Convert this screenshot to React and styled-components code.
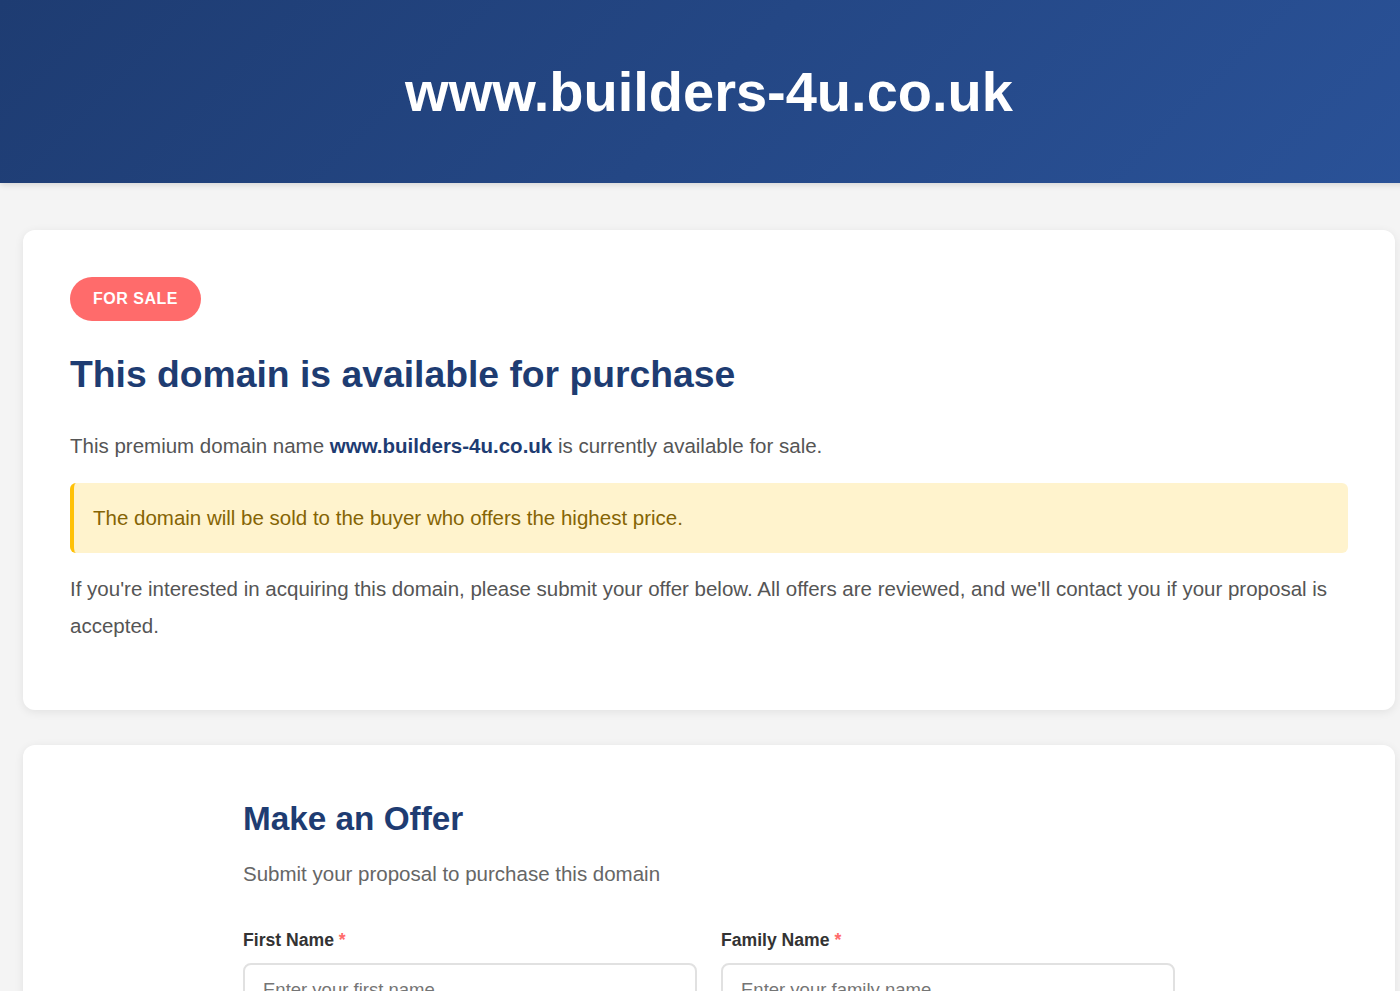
import React from "react";
import styled, { createGlobalStyle } from "styled-components";

const Global = createGlobalStyle`
  html, body { margin: 0; padding: 0; }
  body {
    background: #f4f4f4;
    font-family: "Liberation Sans", Arial, sans-serif;
    overflow-x: hidden;
  }
  * { box-sizing: border-box; }
`;

const Page = styled.div`
  width: 1418px;
`;

const Header = styled.header`
  height: 183px;
  background: linear-gradient(135deg, #1e3c72 0%, #2a5298 100%);
  display: flex;
  align-items: center;
  justify-content: center;
  box-shadow: 0 2px 6px rgba(0, 0, 0, 0.12);
`;

const SiteTitle = styled.h1`
  margin: 0;
  color: #fff;
  font-size: 56px;
  font-weight: 700;
  line-height: 1.2;
`;

const Main = styled.main`
  padding: 47px 23px 40px;
  display: flex;
  flex-direction: column;
  gap: 35px;
`;

const Card = styled.section`
  background: #fff;
  border-radius: 12px;
  box-shadow: 0 2px 10px rgba(0, 0, 0, 0.08);
  padding: ${(p) => p.$pad || "47px"};
`;

const Badge = styled.span`
  display: inline-block;
  background: #ff6b6b;
  color: #fff;
  font-size: 16px;
  font-weight: 700;
  letter-spacing: 0.5px;
  line-height: 20px;
  padding: 12px 23px;
  border-radius: 22px;
`;

const Title = styled.h2`
  margin: ${(p) => p.$margin || "31px 0 30px"};
  color: #1e3c72;
  font-size: ${(p) => p.$size || "37.3px"};
  font-weight: 700;
  line-height: 1.2;
`;

const Text = styled.p`
  margin: 0 0 ${(p) => p.$mb || "19px"};
  color: ${(p) => p.$color || "#555"};
  font-size: 20.5px;
  line-height: 37.4px;
`;

const Strong = styled.strong`
  color: #1e3c72;
`;

const Notice = styled.div`
  background: #fff3cd;
  border-left: 4px solid #ffc107;
  border-radius: 6px;
  color: #856404;
  font-size: 20.5px;
  line-height: 37.4px;
  padding: 16px 19px;
  margin-bottom: 17px;
`;

const FormWrap = styled.div`
  width: 932px;
  margin: 0 auto;
`;

const Row = styled.div`
  display: grid;
  grid-template-columns: 1fr 1fr;
  gap: 24px;
`;

const Field = styled.div`
  display: flex;
  flex-direction: column;
  gap: 10px;
`;

const Label = styled.label`
  font-size: 17.6px;
  font-weight: 700;
  color: #333;
  line-height: 26px;
`;

const Req = styled.span`
  color: #ff6b6b;
`;

const Input = styled.input`
  width: 100%;
  height: 54px;
  border: 2px solid #e1e1e1;
  border-radius: 8px;
  padding: 12px 18px;
  font-family: "Liberation Sans", Arial, sans-serif;
  font-size: 18.5px;
  color: #333;
  &::placeholder { color: #757575; }
`;

export default function App() {
  return (
    <Page>
      <Global />
      <Header>
        <SiteTitle>www.builders-4u.co.uk</SiteTitle>
      </Header>
      <Main>
        <Card>
          <Badge>FOR SALE</Badge>
          <Title>This domain is available for purchase</Title>
          <Text>
            This premium domain name <Strong>www.builders-4u.co.uk</Strong> is currently available for sale.
          </Text>
          <Notice>The domain will be sold to the buyer who offers the highest price.</Notice>
          <Text>
            If you're interested in acquiring this domain, please submit your offer below. All offers are reviewed, and we'll contact you if your proposal is accepted.
          </Text>
        </Card>
        <Card $pad="54px 47px 47px">
          <FormWrap>
            <Title $size="33.3px" $margin="0 0 16px">Make an Offer</Title>
            <Text $color="#666" $mb="34px">Submit your proposal to purchase this domain</Text>
            <Row>
              <Field>
                <Label>First Name <Req>*</Req></Label>
                <Input placeholder="Enter your first name" />
              </Field>
              <Field>
                <Label>Family Name <Req>*</Req></Label>
                <Input placeholder="Enter your family name" />
              </Field>
            </Row>
          </FormWrap>
        </Card>
      </Main>
    </Page>
  );
}
